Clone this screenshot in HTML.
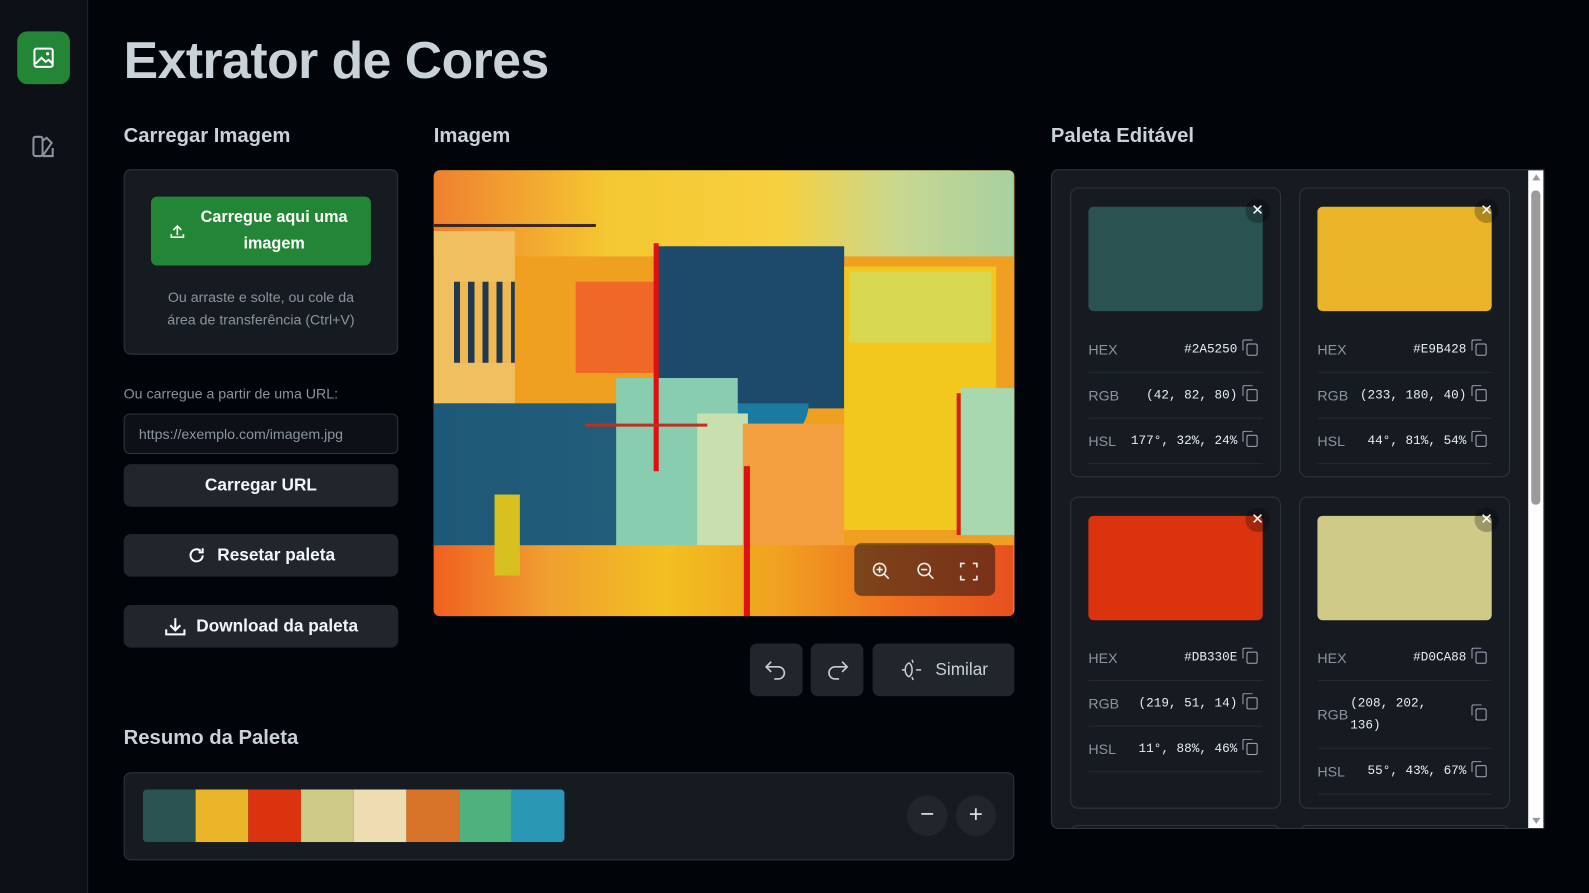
<!DOCTYPE html>
<html><head><meta charset="utf-8"><style>
*{box-sizing:border-box;margin:0;padding:0}
html,body{width:1589px;height:893px;background:#010409;overflow:hidden}
body{font-family:"Liberation Sans",sans-serif;color:#e6edf3;position:relative}
#w{position:absolute;left:0;top:0;width:1568px;height:881px;transform:scale(1.01340);transform-origin:0 0}
.abs{position:absolute}
.side{left:0;top:0;width:87px;height:893px;background:#0d1117;border-right:1px solid #21262d}
h1{position:absolute;left:122px;top:30px;font-size:51px;font-weight:bold;color:#c9d1d9;letter-spacing:-0.5px}
.h2{position:absolute;font-size:20px;color:#c9d1d9;font-weight:bold}
.card{background:#161b22;border:1px solid #30363d;border-radius:7px}
.btn{position:absolute;background:#21262d;border-radius:7px;color:#f0f6fc;font-weight:bold;font-size:17px;display:flex;align-items:center;justify-content:center;gap:10px}
.pc{position:absolute;width:208px;background:#161b22;border:1px solid #30363d;border-radius:8px}
.sw{position:absolute;left:17px;top:18px;width:172px;height:103px;border-radius:5px}
.x{position:absolute;left:172px;top:10px;width:24px;height:24px;border-radius:50%;background:rgba(0,0,0,.25);color:#fff;font-size:15px;text-align:center;line-height:23px}
.row{position:absolute;left:17px;width:172px;border-bottom:1px solid #262b33;font-size:14px;color:#8b949e;display:flex;align-items:center}
.row .v{font-family:"Liberation Mono",monospace;color:#e6edf3;font-size:12.5px;margin-left:auto;margin-right:9px;text-align:right;white-space:nowrap}
.cp{width:11px;height:12px;border:1.5px solid #aab;border-radius:2px;position:relative;margin-right:5px;flex:none}
.cp:after{content:"";position:absolute;left:-5px;top:-5px;width:9px;height:10px;border-left:1.5px solid #aab;border-top:1.5px solid #aab;border-radius:2px 0 0 0}
.p{position:absolute}
</style></head><body><div id="w">
<div class="abs side"></div>
<div class="abs" style="left:17px;top:31px;width:52px;height:52px;background:#238636;border-radius:10px">
<svg width="52" height="52" viewBox="0 0 52 52"><rect x="17" y="17" width="18" height="18" rx="2" fill="none" stroke="#fff" stroke-width="2"/><path d="M18 32l6-6 4 4 3-2 4 4" fill="none" stroke="#fff" stroke-width="2"/><circle cx="30" cy="22" r="1.6" fill="#fff"/></svg></div>
<svg class="abs" style="left:30px;top:132px" width="26" height="26" viewBox="0 0 26 26"><rect x="3" y="3" width="9" height="19" rx="2" fill="none" stroke="#8b949e" stroke-width="2"/><path d="M12 7l4-3 5 5-9 13M12 22h10v-8" fill="none" stroke="#8b949e" stroke-width="2"/></svg>
<h1>Extrator de Cores</h1>
<div class="h2" style="left:122px;top:123px">Carregar Imagem</div>
<div class="h2" style="left:428px;top:123px">Imagem</div>
<div class="h2" style="left:1037px;top:123px">Paleta Editável</div>
<div class="h2" style="left:122px;top:717px">Resumo da Paleta</div>

<div class="abs card" style="left:122px;top:167px;width:271px;height:183px"></div>
<div class="abs" style="left:149px;top:194px;width:217px;height:68px;background:#238636;border-radius:6px;color:#fff;font-weight:bold;font-size:16px;text-align:center;line-height:26px;padding:8px 0 0 26px">Carregue aqui uma<br>imagem</div>
<svg class="abs" style="left:166px;top:219px" width="18" height="18" viewBox="0 0 18 18"><path d="M9 13V4M5 8l4-4 4 4M3 12v3h12v-3" fill="none" stroke="#fff" stroke-width="1.6"/></svg>
<div class="abs" style="left:122px;top:282px;width:271px;text-align:center;font-size:14px;color:#8b949e;line-height:22px">Ou arraste e solte, ou cole da<br>área de transferência (Ctrl+V)</div>
<div class="abs" style="left:122px;top:380px;font-size:14px;color:#8b949e">Ou carregue a partir de uma URL:</div>
<div class="abs" style="left:122px;top:408px;width:271px;height:40px;border:1px solid #30363d;border-radius:6px;background:#0d1117;font-size:14px;color:#8b949e;padding:11px 14px">https://exemplo.com/imagem.jpg</div>
<div class="btn" style="left:122px;top:458px;width:271px;height:42px">Carregar URL</div>
<div class="btn" style="left:122px;top:527px;width:271px;height:42px"><svg width="20" height="20" viewBox="0 0 20 20"><path d="M16 10a6 6 0 1 1-2-4.5M16 3v4h-4" fill="none" stroke="#fff" stroke-width="2"/></svg>Resetar paleta</div>
<div class="btn" style="left:122px;top:597px;width:271px;height:42px"><svg width="22" height="20" viewBox="0 0 22 20"><path d="M11 2v11M6 9l5 5 5-5M2 13v5h18v-5" fill="none" stroke="#fff" stroke-width="2"/></svg>Download da paleta</div>

<div class="abs" style="left:428px;top:168px;width:573px;height:440px;border-radius:6px;overflow:hidden;background:#f0a020">
<div class="p" style="left:0;top:0;width:572px;height:85px;background:linear-gradient(90deg,#f08030,#f4c830 30%,#f6d040 60%,#c8d890 80%,#a8d0a0)"></div>
<div class="p" style="left:0;top:60px;width:80px;height:170px;background:#f0c060"></div>
<div class="p" style="left:20px;top:110px;width:60px;height:80px;background:repeating-linear-gradient(90deg,#203850 0 6px,#f0b850 6px 14px)"></div>
<div class="p" style="left:140px;top:110px;width:80px;height:90px;background:#f06828"></div>
<div class="p" style="left:220px;top:75px;width:185px;height:160px;background:#1d4a6a"></div>
<div class="p" style="left:240px;top:230px;width:130px;height:40px;background:#1a7aa0;border-radius:0 0 60px 0"></div>
<div class="p" style="left:0;top:230px;width:300px;height:175px;background:linear-gradient(90deg,#1d5878,#225e7a 60%,#3c8c90)"></div>
<div class="p" style="left:180px;top:205px;width:120px;height:180px;background:#88cdb0"></div>
<div class="p" style="left:260px;top:240px;width:50px;height:140px;background:#c8e0b0"></div>
<div class="p" style="left:305px;top:250px;width:100px;height:130px;background:#f5a040"></div>
<div class="p" style="left:405px;top:95px;width:150px;height:260px;background:#f2c81e"></div>
<div class="p" style="left:410px;top:100px;width:140px;height:70px;background:#d8d850"></div>
<div class="p" style="left:520px;top:215px;width:53px;height:145px;background:#a8d8b0"></div>
<div class="p" style="left:0;top:370px;width:572px;height:70px;background:linear-gradient(90deg,#f06020,#f0a030 20%,#f2c020 40%,#f0a020 60%,#f07020 80%,#e85020)"></div>
<div class="p" style="left:60px;top:320px;width:25px;height:80px;background:#d8c020"></div>
<div class="p" style="left:217px;top:72px;width:5px;height:225px;background:#e01010"></div>
<div class="p" style="left:306px;top:292px;width:6px;height:148px;background:#e01010"></div>
<div class="p" style="left:516px;top:220px;width:4px;height:140px;background:#d02010"></div>
<div class="p" style="left:0;top:53px;width:160px;height:3px;background:#402818"></div>
<div class="p" style="left:150px;top:250px;width:120px;height:3px;background:#c03020"></div>
<div class="p" style="left:415px;top:368px;width:139px;height:52px;border-radius:7px;background:rgba(30,20,20,.55)"></div>
<svg class="p" style="left:430px;top:385px" width="120" height="22" viewBox="0 0 120 22"><g fill="none" stroke="#eee" stroke-width="1.6"><circle cx="10" cy="9" r="6"/><path d="M14.5 13.5L19 18M7 9h6M10 6v6"/><circle cx="54" cy="9" r="6"/><path d="M58.5 13.5L63 18M51 9h6"/><path d="M90 7V3h4M102 3h4v4M106 15v4h-4M94 19h-4v-4"/></g></svg>
</div>

<div class="btn" style="left:740px;top:635px;width:52px;height:52px"><svg width="26" height="22" viewBox="0 0 26 22"><path d="M8 3L3 8l5 5M3 8h12a6 6 0 0 1 0 12h-4" fill="none" stroke="#ccc" stroke-width="1.6"/></svg></div>
<div class="btn" style="left:800px;top:635px;width:52px;height:52px"><svg width="26" height="22" viewBox="0 0 26 22"><path d="M18 3l5 5-5 5M23 8H11a6 6 0 0 0 0 12h4" fill="none" stroke="#ccc" stroke-width="1.6"/></svg></div>
<div class="btn" style="left:861px;top:635px;width:140px;height:52px;font-weight:normal;color:#c9d1d9"><svg width="26" height="26" viewBox="0 0 26 26"><g fill="none" stroke="#ccc" stroke-width="1.5"><path d="M10 6c-5 3-5 11 0 14M10 6c4 3 4 11 0 14"/><path d="M3 13h3M17 13h5M13 3l1 3M13 20l1 3"/></g></svg>Similar</div>

<div class="abs card" style="left:122px;top:762px;width:879px;height:87px"></div>
<div class="abs" style="left:141px;top:779px;width:416px;height:52px;border-radius:4px;overflow:hidden;display:flex">
<div style="flex:1;background:#2A5250"></div><div style="flex:1;background:#E9B428"></div><div style="flex:1;background:#DB330E"></div><div style="flex:1;background:#D0CA88"></div><div style="flex:1;background:#EEDDB3"></div><div style="flex:1;background:#D8742A"></div><div style="flex:1;background:#4FB27E"></div><div style="flex:1;background:#2A98B4"></div></div>
<div class="abs" style="left:895px;top:785px;width:40px;height:40px;border-radius:50%;background:#21262d;color:#ddd;font-size:24px;text-align:center;line-height:38px">−</div>
<div class="abs" style="left:943px;top:785px;width:40px;height:40px;border-radius:50%;background:#21262d;color:#ddd;font-size:24px;text-align:center;line-height:38px">+</div>

<div class="abs card" style="left:1037px;top:167px;width:487px;height:651px;border-radius:7px 0 0 7px;overflow:hidden">
<div class="p" style="right:0;top:0;width:15px;height:651px;background:#fff"></div>
<div class="p" style="right:3px;top:20px;width:9px;height:310px;background:#9a9a9a;border-radius:4px"></div>
<div class="p" style="right:3px;top:4px;width:0;height:0;border:4px solid transparent;border-bottom:6px solid #999;border-top:0"></div>
<div class="p" style="right:3px;bottom:4px;width:0;height:0;border:4px solid transparent;border-top:6px solid #999;border-bottom:0"></div>
<div class="pc" style="left:18px;top:646px;height:20px"></div><div class="pc" style="left:244px;top:646px;height:20px"></div>
</div>

<div class="pc" style="left:1056px;top:185px;height:286px"><div class="sw" style="background:#2A5250"></div><div class="x">✕</div>
<div class="row" style="top:137px;height:45px">HEX<span class="v">#2A5250</span><i class="cp"></i></div>
<div class="row" style="top:182px;height:45px">RGB<span class="v">(42, 82, 80)</span><i class="cp"></i></div>
<div class="row" style="top:227px;height:45px">HSL<span class="v">177°, 32%, 24%</span><i class="cp"></i></div></div>
<div class="pc" style="left:1282px;top:185px;height:286px"><div class="sw" style="background:#E9B428"></div><div class="x">✕</div>
<div class="row" style="top:137px;height:45px">HEX<span class="v">#E9B428</span><i class="cp"></i></div>
<div class="row" style="top:182px;height:45px">RGB<span class="v">(233, 180, 40)</span><i class="cp"></i></div>
<div class="row" style="top:227px;height:45px">HSL<span class="v">44°, 81%, 54%</span><i class="cp"></i></div></div>
<div class="pc" style="left:1056px;top:490px;height:308px"><div class="sw" style="background:#DB330E"></div><div class="x">✕</div>
<div class="row" style="top:136px;height:45px">HEX<span class="v">#DB330E</span><i class="cp"></i></div>
<div class="row" style="top:181px;height:45px">RGB<span class="v">(219, 51, 14)</span><i class="cp"></i></div>
<div class="row" style="top:226px;height:45px">HSL<span class="v">11°, 88%, 46%</span><i class="cp"></i></div></div>
<div class="pc" style="left:1282px;top:490px;height:308px"><div class="sw" style="background:#D0CA88"></div><div class="x">✕</div>
<div class="row" style="top:136px;height:45px">HEX<span class="v">#D0CA88</span><i class="cp"></i></div>
<div class="row" style="top:181px;height:67px">RGB<span class="v" style="margin-left:2px;text-align:left;line-height:22px;width:110px;margin-right:auto;white-space:normal">(208, 202,<br>136)</span><i class="cp"></i></div>
<div class="row" style="top:248px;height:45px">HSL<span class="v">55°, 43%, 67%</span><i class="cp"></i></div></div>
</div></body></html>
